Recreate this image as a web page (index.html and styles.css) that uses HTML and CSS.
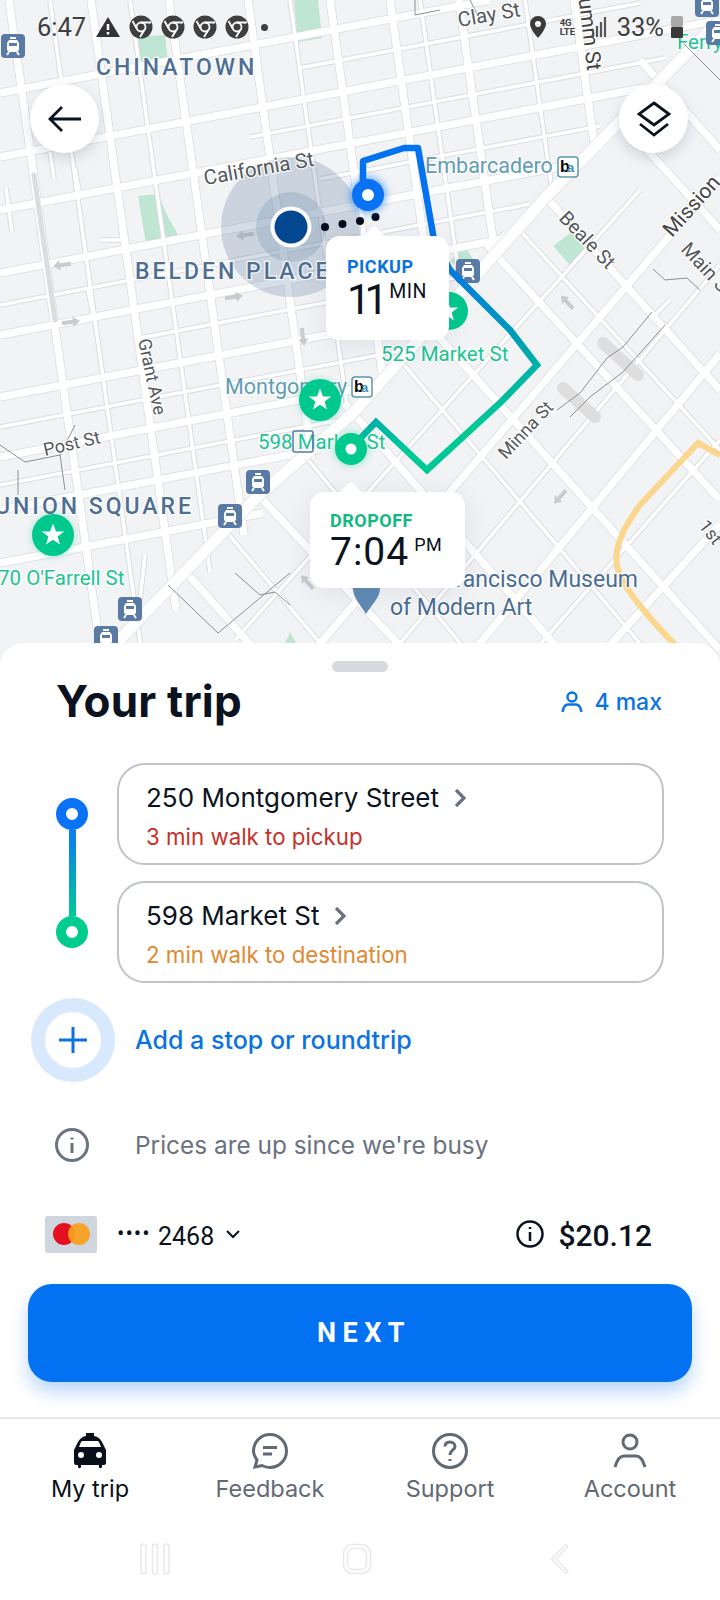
FILE: index.html
```html
<!DOCTYPE html>
<html lang="en">
<head>
<meta charset="utf-8">
<title>Your trip</title>
<link rel="stylesheet" href="styles.css">
</head>
<body>
<div class="app">
  <section class="map">
    <svg class="map-art" viewBox="0 0 720 667" width="720" height="667">
      <defs>
        <g id="major">
          <path d="M9 0L106 690M91 0L176 610M169 0L244 535M248 0L312 459M330 0L383 379M390 0L435 320M459 0L495 254M574 0L594 142"/>
          <path d="M0 93L490 0M0 157L720 20M0 210L643 88M0 273L575 164M0 335L509 238M0 397L442 313M0 457L377 385M0 510L320 449M0 563L263 513"/>
          <path d="M344 403L574 667M430 327L720 650M487 245L720 500M546 197L720 390M620 120L720 230M260 497L420 667M184 570L270 667M640 60L720 150"/>
          <path d="M720 177L300 667M720 354L460 667M720 524L590 667"/>
        </g>
        <g id="minor">
          <path d="M50 0L141 648M130 0L210 572M290 0L349 420M420 0L461 290M525 0L552 190"/>
          <path d="M300 68L640 3M250 137L665 58M320 179L600 126M0 305L530 204M140 338L470 275M0 427L405 350M0 485L345 419"/>
          <path d="M400 360L660 667M515 225L720 450M300 450L480 667M225 530L340 667"/>
          <path d="M720 265L380 667M720 440L520 667M640 190L235 640"/>
          <path d="M6 188L12 232M50 152L54 178M75 168L80 196M100 240H125M88 290L94 320M490 250L505 232M670 300L655 315M145 555L140 600"/>
        </g>
        <path id="star" d="M0-11.5L3 -3.6 11.2-3.6 4.6 1.4 7 9.5 0 4.7-7 9.5-4.6 1.4-11.2-3.6-3-3.6Z"/>
        <path id="arrow" d="M-9 0L-2-5V-2H9V2H-2V5Z"/>
        <g id="tram">
          <rect class="tram-bg" x="-12" y="-12" width="24" height="24" rx="4"/>
          <path class="tram-body" d="M-4-6H4L6-3V4L4 6H-4L-6 4V-3Z"/>
          <rect class="tram-bg" x="-4" y="-3" width="8" height="3"/>
          <path class="tram-fg" d="M-3-8H3M-4 6L-6 9M4 6L6 9"/>
        </g>
        <g id="bart">
          <rect class="bart-bg" x="-10" y="-10" width="20" height="20" rx="3"/>
          <text class="bart-b" x="-8" y="5">b</text><text class="bart-a" x="-1" y="5">a</text>
        </g>
        <linearGradient id="routeGrad" gradientUnits="userSpaceOnUse" x1="440" y1="250" x2="500" y2="420">
          <stop offset="0" stop-color="#0272f0"/><stop offset=".55" stop-color="#0099bb"/><stop offset="1" stop-color="#00c996"/>
        </linearGradient>
        <filter id="glow" x="-60%" y="-60%" width="220%" height="220%"><feGaussianBlur stdDeviation="4"/></filter>
      </defs>

      <rect class="ground" width="720" height="667"/>
      <path class="park" d="M135 37L165 35 168 62 150 72 137 65ZM294 0H318L322 38 298 42ZM138 196L158 194 166 213 178 235 146 244ZM553 246L572 232 586 250 570 265ZM450 262L463 243 475 262 468 270ZM275 667L290 632 310 667Z"/>
      <use class="case case-major" href="#major"/>
      <use class="case case-minor" href="#minor"/>
      <use class="fill fill-major" href="#major"/>
      <use class="fill fill-minor" href="#minor"/>
      <path class="case case-market" d="M100 660L257 497 353 413 546 197 680 60 720 20"/>
      <path class="fill fill-market" d="M100 660L257 497 353 413 546 197 680 60 720 20"/>
      <path class="ramp" d="M720 455L698 443 640 505Q610 545 618 570T680 650"/>
      <path class="stripe" d="M34 175L55 320"/>
      <path class="pier" d="M603 343L638 375M563 388L595 417"/>
      <path class="thin" d="M0 445L25 462 60 455 75 425M18 470V495M60 455L65 490M652 312L623 347 607 358 580 393 557 410M665 325L623 372 590 397 570 417M653 269L665 280 687 278 700 290M168 585L218 633 290 573M235 573L260 595 275 592 290 605M415 0V15L440 10M470 0L480 20M680 40L720 80"/>

      <g class="arrows">
        <use href="#arrow" transform="translate(245 235) rotate(-8)"/>
        <use href="#arrow" transform="translate(62 265) rotate(-8)"/>
        <use href="#arrow" transform="translate(234 297) rotate(172)"/>
        <use href="#arrow" transform="translate(71 322) rotate(172)"/>
        <use href="#arrow" transform="translate(567 302) rotate(47)"/>
        <use href="#arrow" transform="translate(303 337) rotate(-98)"/>
        <use href="#arrow" transform="translate(560 497) rotate(-48)"/>
        <use href="#arrow" transform="translate(307 582) rotate(48)"/>
      </g>

      <circle class="acc-outer" cx="291" cy="227" r="70"/>
      <circle class="acc-inner" cx="291" cy="227" r="35"/>

      <text class="area" x="96" y="75">CHINATOWN</text>
      <text class="area" x="135" y="279">BELDEN PLACE</text>
      <text class="area" x="-5" y="514">UNION SQUARE</text>
      <text class="poi-blue" x="638" y="587" text-anchor="end">San Francisco Museum</text>
      <text class="poi-blue" x="390" y="615">of Modern Art</text>
      <text class="poi-green" x="381" y="361">525 Market St</text>
      <text class="poi-green" x="258" y="449">598 Market St</text>
      <text class="poi-green" x="-2" y="585">70 O'Farrell St</text>
      <text class="poi-green" x="677" y="49">Ferry</text>
      <text class="poi-teal" x="425" y="173">Embarcadero</text>
      <text class="poi-teal" x="225" y="394">Montgomery</text>

      <text class="street street-big" transform="translate(205 185) rotate(-10)">California St</text>
      <text class="street street-big" transform="translate(459 27) rotate(-10)">Clay St</text>
      <text class="street street-mid" transform="translate(558 219) rotate(46)">Beale St</text>
      <text class="street-bold" transform="translate(672 238) rotate(-48)">Mission</text>
      <text class="street street-mid" transform="translate(680 250) rotate(47)">Main St</text>
      <text class="street" transform="translate(506 460) rotate(-47)">Minna St</text>
      <text class="street" transform="translate(138 340) rotate(78)">Grant Ave</text>
      <text class="street" transform="translate(45 456) rotate(-13)">Post St</text>
      <text class="street" transform="translate(698 526) rotate(52)">1st</text>
      <text class="street-bold" transform="translate(576 -22) rotate(83)">Drumm St</text>

      <use href="#tram" x="13" y="46"/><use href="#tram" x="468" y="271"/><use href="#tram" x="258" y="482"/>
      <use href="#tram" x="230" y="516"/><use href="#tram" x="130" y="609"/><use href="#tram" x="106" y="638"/>
      <use href="#tram" x="707" y="5"/><use href="#tram" x="718" y="33"/>
      <use href="#bart" x="568" y="167"/><use href="#bart" x="362" y="387"/>
      <rect class="muni-outline" x="293" y="431" width="20" height="21" rx="2"/>
      <path class="museum-pin" d="M353 588H380C380 598 372 604 366 614C360 604 353 598 353 588Z"/>

      <path class="route-blue" d="M363 185V161L404 148H418L434 240"/>
      <path class="route-grad" d="M434 240L450 270 510 330 537 365 500 403 427 470 376 422 351 448"/>
      <g class="dots"><circle cx="325" cy="227" r="4"/><circle cx="342.500" cy="224" r="4"/><circle cx="360" cy="221" r="4"/><circle cx="375.500" cy="217" r="4"/></g>
      <circle class="me-ring" cx="291" cy="227" r="20.500"/>
      <circle class="me-dot" cx="291" cy="227" r="16.500"/>

      <circle class="glow-blue" cx="368" cy="195" r="17" filter="url(#glow)"/>
      <circle class="mark-blue" cx="368" cy="195" r="16"/>
      <circle class="mark-hole" cx="368" cy="195" r="6"/>

      <circle class="glow-green" cx="351" cy="449" r="16" filter="url(#glow)"/>
      <circle class="mark-green" cx="351" cy="449" r="16"/>
      <circle class="mark-hole" cx="351" cy="449" r="5.500"/>

      <circle class="glow-green" cx="320" cy="400" r="20" filter="url(#glow)"/>
      <circle class="mark-green" cx="320" cy="400" r="21"/>
      <use class="star" href="#star" x="320" y="400"/>
      <circle class="glow-green" cx="53" cy="535" r="20" filter="url(#glow)"/>
      <circle class="mark-green" cx="53" cy="535" r="21"/>
      <use class="star" href="#star" x="53" y="535"/>
      <circle class="mark-green" cx="449" cy="311" r="19"/>
      <use class="star" href="#star" x="447" y="311"/>
    </svg>

    <div class="status">
      <span class="clock">6:47</span>
      <svg class="st-warn" viewBox="0 0 24 20" width="24" height="20"><path d="M12 0L24 20H0Z"/><path class="st-warn-mark" d="M12 7V13M12 15V17.500"/></svg>
      <svg class="st-apps" viewBox="0 0 128 24" width="128" height="24">
        <g id="chromeIcon"><circle cx="12" cy="12" r="11.500"/><circle class="ch-ring" cx="12" cy="12" r="4.500"/><path class="ch-ring" d="M12 7.500H22M8 14L3.500 6M16 14L11 22"/></g>
        <use href="#chromeIcon" x="32"/><use href="#chromeIcon" x="64"/><use href="#chromeIcon" x="96"/>
      </svg>
      <span class="st-dot"></span>
      <span class="st-spacer"></span>
      <svg class="st-pin" viewBox="0 0 16 22" width="16" height="22"><path fill-rule="evenodd" d="M8 0A8 8 0 0 1 16 8C16 13 8 22 8 22S0 13 0 8A8 8 0 0 1 8 0ZM8 5A3 3 0 1 0 8 11 3 3 0 0 0 8 5Z"/></svg>
      <span class="st-net"><b>4G</b><b>LTE</b></span>
      <svg class="st-bars" viewBox="0 0 16 22" width="16" height="22"><path d="M1 14V21M5 10V21M9 6V21M13 1V21"/></svg>
      <span class="st-pct">33%</span>
      <svg class="st-batt" viewBox="0 0 14 24" width="14" height="24"><rect class="batt-top" x="1" y="1" width="12" height="11" rx="2"/><rect x="1" y="12" width="12" height="11" rx="1"/></svg>
    </div>

    <button class="fab fab-back" type="button" aria-label="Back">
      <svg viewBox="0 0 34 28" width="34" height="28"><path d="M33 14H3M14 2L2 14 14 26"/></svg>
    </button>
    <button class="fab fab-layers" type="button" aria-label="Layers">
      <svg viewBox="0 0 34 36" width="34" height="36"><path d="M17 2L32 13 17 24 2 13ZM3 23L17 34 31 23"/></svg>
    </button>

    <div class="callout callout-pickup">
      <span class="callout-label">PICKUP</span>
      <span class="callout-value">11<sup>MIN</sup></span>
    </div>
    <div class="callout callout-dropoff">
      <span class="callout-label">DROPOFF</span>
      <span class="callout-value">7:04<sup>PM</sup></span>
    </div>
  </section>

  <section class="sheet">
    <div class="grabber"></div>
    <header class="head">
      <h1 class="title">Your trip</h1>
      <div class="seats">
        <svg viewBox="0 0 22 22" width="22" height="22"><circle cx="11" cy="6" r="4.500"/><path d="M1.500 21C2.500 15.500 5 13.500 7 13.500H15C17 13.500 19.500 15.500 20.500 21"/></svg>
        <span>4 max</span>
      </div>
    </header>

    <div class="route">
      <div class="rail">
        <span class="rail-dot rail-dot-from"></span>
        <span class="rail-line"></span>
        <span class="rail-dot rail-dot-to"></span>
      </div>
      <div class="cards">
        <div class="card">
          <div class="card-name">250 Montgomery Street
            <svg viewBox="0 0 12 20" width="12" height="20"><path d="M2 2L10 10 2 18"/></svg>
          </div>
          <div class="card-note note-red">3 min walk to pickup</div>
        </div>
        <div class="card">
          <div class="card-name">598 Market St
            <svg viewBox="0 0 12 20" width="12" height="20"><path d="M2 2L10 10 2 18"/></svg>
          </div>
          <div class="card-note note-orange">2 min walk to destination</div>
        </div>
      </div>
    </div>

    <div class="add">
      <span class="add-halo">
        <svg viewBox="0 0 30 28" width="30" height="28"><path d="M1 14H29M15 1V27"/></svg>
      </span>
      <span class="add-text">Add a stop or roundtrip</span>
    </div>

    <div class="notice">
      <svg class="info-grey" viewBox="0 0 34 34" width="34" height="34"><circle cx="17" cy="17" r="15.500"/><path d="M17 15V25M17 9.500V11.500"/></svg>
      <span>Prices are up since we're busy</span>
    </div>

    <div class="pay">
      <div class="pay-card">
        <span class="mc mc-red"></span><span class="mc mc-orange"></span>
      </div>
      <span class="pay-dots">••••</span>
      <span class="pay-num">2468</span>
      <svg class="pay-chev" viewBox="0 0 14 9" width="14" height="9"><path d="M1 1L7 7 13 1"/></svg>
      <span class="pay-spacer"></span>
      <svg class="info-dark" viewBox="0 0 28 28" width="28" height="28"><circle cx="14" cy="14" r="12.500"/><path d="M14 12V21M14 7V9"/></svg>
      <span class="pay-price">$20.12</span>
    </div>

    <button class="next" type="button">NEXT</button>

    <nav class="tabs">
      <div class="tab tab-on">
        <svg class="tab-ico" viewBox="0 0 36 36" width="36" height="36"><path class="taxi" fill-rule="evenodd" d="M14 0H22V3C25 3.500 28 5 30 9L34 17V30C34 31 33 32 32 32H30V34C30 35.500 27 35.500 27 34V32H9V34C9 35.500 6 35.500 6 34V32H4C3 32 2 31 2 30V17L6 9C8 5 11 3.500 14 3ZM11 8C10 8 9.500 8.500 9 9L7 14H29L27 9C26.500 8.500 26 8 25 8ZM9 19A3 3 0 1 0 9 25 3 3 0 0 0 9 19ZM27 19A3 3 0 1 0 27 25 3 3 0 0 0 27 19Z"/></svg>
        <span>My trip</span>
      </div>
      <div class="tab">
        <svg class="tab-ico tab-line" viewBox="0 0 36 36" width="36" height="36"><path d="M3 34L5 27C3 24 1.500 21.500 1.500 18A16.500 16.500 0 1 1 18 34.500C15 34.500 13 34 10 32.500Z"/><path d="M11 14.500H25M11 21H20"/></svg>
        <span>Feedback</span>
      </div>
      <div class="tab">
        <svg class="tab-ico tab-line" viewBox="0 0 36 36" width="36" height="36"><circle cx="18" cy="18" r="16.500"/><path d="M13 13.500C13 10.500 15 9 18 9S23 11 23 13.500C23 17 18 17 18 22M18 26V28"/></svg>
        <span>Support</span>
      </div>
      <div class="tab">
        <svg class="tab-ico tab-line" viewBox="0 0 36 36" width="36" height="36"><circle cx="18" cy="9" r="7"/><path d="M3 34C5 27 8 23 12 23H24C28 23 31 27 33 34"/></svg>
        <span>Account</span>
      </div>
    </nav>

    <div class="sysnav">
      <svg viewBox="0 0 30 32" width="30" height="32"><rect x="1" y="1" width="5" height="30" rx="2.500"/><rect x="12.500" y="1" width="5" height="30" rx="2.500"/><rect x="24" y="1" width="5" height="30" rx="2.500"/></svg>
      <svg viewBox="0 0 30 32" width="30" height="32"><rect x="1.500" y="1.500" width="27" height="29" rx="9"/><rect x="5.500" y="5.500" width="19" height="21" rx="6"/></svg>
      <svg viewBox="0 0 20 32" width="20" height="32"><path d="M17 1.500L2.500 16 17 30.500L19 28.500 7 16 19 3.500Z"/></svg>
    </div>
  </section>
</div>
</body>
</html>
```

FILE: styles.css
```css
* { box-sizing: border-box; }
html, body { margin: 0; padding: 0; background: #fff; }
body { font-family: Inter, Roboto, sans-serif; color: #0b1220; }
.app { width: 720px; height: 1600px; overflow: hidden; }

/* map */
.map { position: relative; width: 720px; height: 667px; overflow: hidden; font-family: Roboto, sans-serif; }
.map-art { display: block; }
.ground { fill: #f2f3f5; }
.park { fill: #bfe6d3; }
use.case, path.case, use.fill, path.fill { fill: none; stroke-linecap: butt; }
.case-major { stroke: #dadce0; stroke-width: 9; }
.case-minor { stroke: #dadce0; stroke-width: 5.5; }
.fill-major { stroke: #fff; stroke-width: 7.5; }
.fill-minor { stroke: #fff; stroke-width: 3.5; }
.case-market { stroke: #e4e6e9; stroke-width: 13; fill: none; }
.fill-market { stroke: #fff; stroke-width: 11; fill: none; }
.ramp { fill: none; stroke: #fbd68f; stroke-width: 6; }
.stripe { fill: none; stroke: #dcdddf; stroke-width: 5; stroke-linecap: round; }
.pier { fill: none; stroke: #dedede; stroke-width: 12; stroke-linecap: round; }
.thin { fill: none; stroke: #8b9096; stroke-width: 1; }
.arrows { fill: #c9cbce; }
.acc-outer { fill: #5b7a9e; fill-opacity: .26; }
.acc-inner { fill: #5b7a9e; fill-opacity: .22; }
.area, .poi-blue, .poi-green, .poi-teal, .street, .street-bold {
  paint-order: stroke; stroke: #fff; stroke-width: 2.5px; stroke-opacity: .85;
  font-family: Roboto, sans-serif;
}
.area { font-size: 23px; font-weight: 500; letter-spacing: 3px; fill: #4f6f94; }
.poi-blue { font-size: 23px; fill: #4a6d94; }
.poi-green { font-size: 20.500px; fill: #1cc492; }
.poi-teal { font-size: 21.500px; fill: #629db4; }
.street { font-size: 18px; fill: #55585c; }
.street-big { font-size: 20.500px; }
.street-mid { font-size: 19.500px; }
.street-bold { font-size: 21px; fill: #444; }
.tram-bg { fill: #5a7aa6; }
.tram-body { fill: #fff; }
.tram-fg { fill: none; stroke: #fff; stroke-width: 2; }
.bart-bg { fill: #fff; stroke: #5d97ad; stroke-width: 1.500; }
.bart-b { font: bold 16px "Liberation Sans", sans-serif; fill: #000; }
.bart-a { font: bold 13px "Liberation Sans", sans-serif; fill: #3f8fb0; }
.muni-outline { fill: none; stroke: #5a7aa6; stroke-width: 1.500; }
.museum-pin { fill: #5f8ab5; }
.route-blue { fill: none; stroke: #0272f0; stroke-width: 6.500; stroke-linejoin: round; }
.route-grad { fill: none; stroke: url(#routeGrad); stroke-width: 6.500; }
.dots { fill: #050c1e; }
.me-ring { fill: #fff; }
.me-dot { fill: #02478f; }
.glow-blue { fill: #0a73f5; opacity: .7; }
.glow-green { fill: #00c98d; opacity: .45; }
.mark-blue { fill: #0a73f5; }
.mark-green { fill: #00c98d; }
.mark-hole { fill: #fff; }
.star { fill: #fff; }

/* status bar */
.status {
  position: absolute; left: 37px; right: 36px; top: 14px; height: 26px;
  display: flex; align-items: center; color: #3f3f3f;
}
.clock { font-size: 25.500px; width: 59px; }
.st-warn { fill: #333; flex: none; }
.st-warn-mark { fill: none; stroke: #fff; stroke-width: 2.500; }
.st-apps { margin-left: 9px; fill: #3f3f3f; flex: none; }
.ch-ring { fill: none; stroke: #fff; stroke-width: 1.800; }
.st-dot { width: 7px; height: 7px; border-radius: 50%; background: #3f3f3f; margin-left: 4px; }
.st-spacer { flex: 1; }
.st-pin { fill: #3a3a3a; flex: none; }
.st-net { display: flex; flex-direction: column; margin-left: 14px; width: 20px; line-height: 9px; font-size: 9.500px; }
.st-net b { display: block; }
.st-bars { fill: none; stroke: #555; stroke-width: 2.200; margin-left: 12px; flex: none; }
.st-pct { font-size: 25.500px; margin-left: 9px; }
.st-batt { margin-left: 6px; fill: #3a3a3a; flex: none; }
.batt-top { fill: #a8a8a8; }

/* floating buttons */
.fab {
  position: absolute; top: 84px; width: 69px; height: 69px; padding: 0; border: 0;
  border-radius: 50%; background: #fff; box-shadow: 0 5px 14px rgba(60, 80, 110, .2);
  display: flex; align-items: center; justify-content: center;
}
.fab svg { fill: none; stroke: #0b1220; stroke-width: 2.800; }
.fab-back { left: 30px; }
.fab-layers { right: 32px; }

/* callouts */
.callout {
  position: absolute; background: #fff; border-radius: 14px; display: flex; flex-direction: column;
  box-shadow: 0 4px 26px rgba(70, 90, 120, .12);
}
.callout::before {
  content: ""; position: absolute; width: 22px; height: 22px; background: #fff;
  transform: rotate(45deg); border-radius: 3px; top: -6px;
}
.callout-pickup { left: 326px; top: 236px; width: 123px; height: 104px; padding: 21px 0 0 21px; }
.callout-pickup::before { left: 37px; }
.callout-dropoff { left: 310px; top: 492px; width: 155px; height: 96px; padding: 19px 0 0 20px; }
.callout-dropoff::before { left: 30px; }
.callout-label, .callout-value { position: relative; }
.callout-label { font-size: 18px; font-weight: 700; line-height: 20px; letter-spacing: .5px; }
.callout-pickup .callout-label { color: #0a73e0; }
.callout-dropoff .callout-label { color: #14b884; }
.callout-value { margin-top: 1px; font-size: 42px; line-height: 44px; letter-spacing: -6px; color: #0b1220; display: flex; align-items: flex-start; white-space: nowrap; }
.callout-dropoff .callout-value { margin-top: 0; font-size: 39px; letter-spacing: 1px; line-height: 42px; }
.callout-value sup { font-size: 19.500px; line-height: 24px; letter-spacing: .5px; margin: 2px 0 0 7px; vertical-align: baseline; }
.callout-dropoff sup { margin: 2px 0 0 5px; font-size: 18px; }

/* sheet */
.sheet {
  position: relative; margin-top: -24px; height: 957px; background: #fff;
  border-radius: 24px 24px 0 0; display: flex; flex-direction: column;
}
.grabber { width: 56px; height: 11px; background: #d8dade; border-radius: 6px; margin: 18px auto 0; flex: none; }
.head { display: flex; justify-content: space-between; align-items: center; margin-top: 6px; height: 47px; padding: 0 58px 0 56px; flex: none; }
.title { margin: 0; font-size: 44px; line-height: 47px; font-weight: 700; color: #0b1220; letter-spacing: .2px; }
.seats { display: flex; align-items: center; gap: 11px; color: #0a73e0; font-size: 23px; font-weight: 500; }
.seats svg { fill: none; stroke: #0a73e0; stroke-width: 2.400; }

.route { display: flex; margin-top: 38px; flex: none; }
.rail { width: 32px; margin: 35px 29px 0 56px; display: flex; flex-direction: column; align-items: center; flex: none; }
.rail-dot { width: 32px; height: 32px; border-radius: 50%; border: 10px solid; background: #fff; flex: none; }
.rail-dot-from { border-color: #0a73f5; }
.rail-dot-to { border-color: #00cc8e; }
.rail-line { width: 7px; height: 86px; background: linear-gradient(#0a7cf0, #00c996); flex: none; }
.cards { width: 547px; display: flex; flex-direction: column; gap: 16px; }
.card { height: 102px; border: 2px solid #bfc4ca; border-radius: 28px; padding: 18px 0 0 27px; }
.card-name { display: flex; align-items: center; gap: 15px; font-size: 26px; line-height: 30px; color: #0b1220; font-weight: 400; }
.card-name svg { fill: none; stroke: #6b7280; stroke-width: 3.200; flex: none; }
.card-note { font-size: 22.300px; line-height: 28px; margin-top: 10px; }
.note-red { color: #c8302a; }
.note-orange { color: #df8a33; }

.add { display: flex; align-items: center; gap: 20px; margin-top: 15px; height: 84px; padding-left: 31px; flex: none; }
.add-halo { width: 84px; height: 84px; border-radius: 50%; border: 14px solid #d9e9fd; background: #fff; display: flex; align-items: center; justify-content: center; flex: none; }
.add-halo svg { fill: none; stroke: #0a73e0; stroke-width: 3; }
.add-text { font-size: 25px; font-weight: 500; color: #0a73e0; }

.notice { display: flex; align-items: center; gap: 46px; margin-top: 43px; height: 40px; padding-left: 55px; font-size: 24.400px; color: #6b7280; flex: none; }
.info-grey { fill: none; stroke: #6b7280; stroke-width: 3; flex: none; }

.pay { display: flex; align-items: center; margin-top: 50px; height: 38px; padding: 0 68px 0 45px; flex: none; font-family: Roboto, sans-serif; }
.pay-card { position: relative; width: 52px; height: 37px; background: #cfd6de; border-radius: 3px; flex: none; }
.mc { position: absolute; top: 7px; width: 22px; height: 22px; border-radius: 50%; }
.mc-red { left: 8px; background: #e4101f; }
.mc-orange { left: 23px; background: #f99f1e; opacity: .95; }
.pay-dots { margin-left: 20px; font-size: 22px; line-height: 1; letter-spacing: 1px; color: #0b1220; width: 41px; }
.pay-num { font-size: 25px; color: #0b1220; padding-top: 5px; }
.pay-chev { margin-left: 12px; fill: none; stroke: #0b1220; stroke-width: 2; flex: none; }
.pay-spacer { flex: 1; }
.info-dark { fill: none; stroke: #0b1220; stroke-width: 2.500; flex: none; }
.pay-price { margin-left: 14px; font-size: 30px; font-weight: 500; color: #0b1220; padding-top: 3px; }

.next {
  display: block; flex: none; margin: 31px 0 0 28px; width: 664px; height: 98px; border: 0; border-radius: 24px;
  padding: 0 0 0 8px;
  background: #0271f2; color: #fff; font: 700 27px Roboto, sans-serif; letter-spacing: 6.5px;
  box-shadow: 0 10px 18px rgba(2, 113, 242, .28);
}

.tabs { display: grid; grid-template-columns: repeat(4, 180px); margin-top: 35px; border-top: 2px solid #e6e7e9; padding-top: 14px; flex: none; }
.tab { display: flex; flex-direction: column; align-items: center; font-size: 23.500px; line-height: 30px; color: #616975; }
.tab-on { color: #0a0f1c; }
.tab-ico { margin-bottom: 5px; display: block; }
.taxi { fill: #0a0f1c; }
.tab-line { fill: none; stroke: #616975; stroke-width: 3; }

.sysnav { display: flex; margin-top: 39px; padding-left: 140px; flex: none; }
.sysnav svg { fill: none; stroke: #e9e9e9; stroke-width: 1.500; flex: none; }
.sysnav svg + svg { margin-left: 172px; }
.sysnav svg + svg + svg { margin-left: 177px; }
```
